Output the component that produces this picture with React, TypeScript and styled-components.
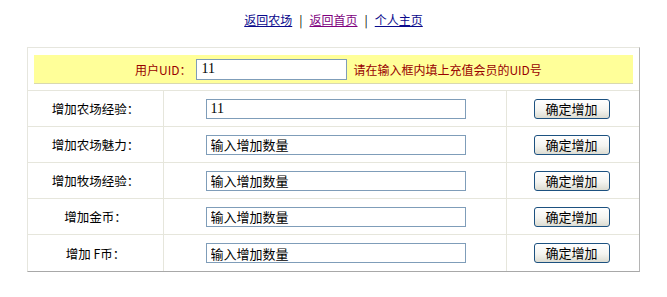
import React from "react";
import styled, { createGlobalStyle } from "styled-components";

const GlobalStyle = createGlobalStyle`
  html, body { margin: 0; padding: 0; background: #ffffff; }
  body { font-family: "Noto Sans CJK SC", "DejaVu Sans", sans-serif; font-size: 12px; color: #000; }
`;

const Nav = styled.div`
  padding-top: 11px;
  height: 47px;
  box-sizing: border-box;
  text-align: center;
  font-size: 12px;
  line-height: 17px;
`;

const NavLink = styled.a<{ $visited?: boolean }>`
  color: ${(p) => (p.$visited ? "#800080" : "#0a0a8c")};
  text-decoration: underline;
  cursor: pointer;
`;

const Sep = styled.span`
  margin: 0 7px;
  color: #000;
`;

const Panel = styled.div`
  width: 613px;
  margin: 0 0 0 27px;
  box-sizing: border-box;
  border-top: 1px solid #e6e6de;
  border-left: 1px solid #e6e6de;
  border-right: 1px solid #b4b4b4;
  border-bottom: 1px solid #a8a8a8;
`;

const HeaderCell = styled.div`
  padding: 7px 6px 6px;
  border-bottom: 1px solid #e6e6dc;
`;

const YellowBar = styled.div`
  height: 29px;
  box-sizing: border-box;
  background: #ffff99;
  border-bottom: 1px solid #d9d9b0;
  display: flex;
  align-items: center;
  padding-left: 101px;
  color: #990000;
  font-size: 12px;
`;

const HeaderLabel = styled.span`
  margin-right: 5px;
`;

const Hint = styled.span`
  margin-left: 6px;
`;

const Row = styled.div<{ $last?: boolean }>`
  display: grid;
  grid-template-columns: 136px 343px 132px;
  height: 36px;
  box-sizing: border-box;
  border-bottom: ${(p) => (p.$last ? "none" : "1px solid #e6e6dc")};
`;

const LabelCell = styled.div`
  border-right: 1px solid #e6e6dc;
  display: flex;
  align-items: center;
  justify-content: center;
  padding-right: 0;
  font-size: 12.5px;
`;

const InputCell = styled.div`
  border-right: 1px solid #e6e6dc;
  display: flex;
  align-items: center;
  justify-content: center;
  padding-left: 1px;
`;

const ButtonCell = styled.div`
  display: flex;
  align-items: center;
  justify-content: center;
  padding-right: 3px;
`;

const TextInput = styled.input<{ $w: number; $h?: number; $num?: boolean }>`
  width: ${(p) => p.$w}px;
  height: ${(p) => p.$h ?? 20}px;
  box-sizing: border-box;
  border: 1px solid #7f9db9;
  padding: 0 4px;
  margin: 0;
  font-family: "Liberation Serif", "Noto Sans CJK SC", serif;
  font-size: ${(p) => (p.$num ? 14 : 13)}px;
  color: #000;
  background: #fff;
  outline: none;
`;

const Button = styled.button`
  width: 76px;
  height: 20px;
  box-sizing: border-box;
  padding: 0;
  margin: 0;
  border: 1px solid #1c5180;
  border-radius: 3px;
  background: linear-gradient(#ffffff 0%, #f4f4f0 55%, #dcdcd2 100%);
  font-family: "Noto Sans CJK SC", sans-serif;
  font-size: 13px;
  line-height: 18px;
  color: #000;
  cursor: pointer;
`;

const rows = [
  { label: "增加农场经验：", value: "11" },
  { label: "增加农场魅力：", value: "输入增加数量" },
  { label: "增加牧场经验：", value: "输入增加数量" },
  { label: "增加金币：", value: "输入增加数量" },
  { label: "增加 F币：", value: "输入增加数量" },
];

export default function App() {
  return (
    <>
      <GlobalStyle />
      <Nav>
        <NavLink>返回农场</NavLink>
        <Sep>|</Sep>
        <NavLink $visited>返回首页</NavLink>
        <Sep>|</Sep>
        <NavLink>个人主页</NavLink>
      </Nav>
      <Panel>
        <HeaderCell>
          <YellowBar>
            <HeaderLabel>用户UID：</HeaderLabel>
            <TextInput $w={151} $h={21} $num defaultValue="11" />
            <Hint>请在输入框内填上充值会员的UID号</Hint>
          </YellowBar>
        </HeaderCell>
        {rows.map((r, i) => (
          <Row key={i} $last={i === rows.length - 1}>
            <LabelCell>{r.label}</LabelCell>
            <InputCell>
              <TextInput $w={260} $num={/^\d+$/.test(r.value)} defaultValue={r.value} />
            </InputCell>
            <ButtonCell>
              <Button>确定增加</Button>
            </ButtonCell>
          </Row>
        ))}
      </Panel>
    </>
  );
}
